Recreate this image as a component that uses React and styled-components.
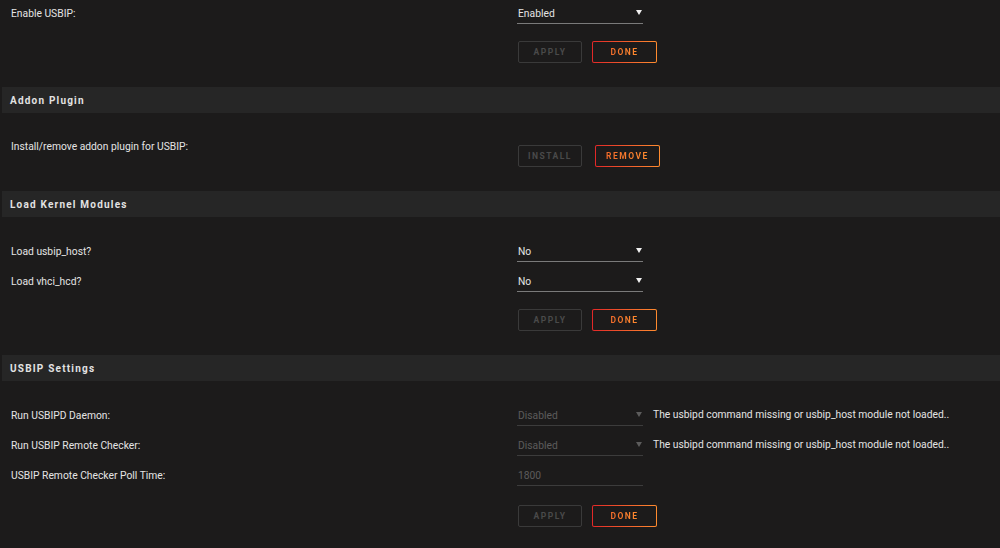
import React from 'react'
import styled, { createGlobalStyle } from 'styled-components'

const GlobalStyle = createGlobalStyle`
  html, body {
    margin: 0;
    padding: 0;
    background: #1c1b1b;
  }
  body {
    font-family: Roboto, 'Liberation Sans', sans-serif;
    color: #e4e4e4;
    font-size: 10.3px;
  }
`

const Page = styled.div`
  width: 1000px;
  height: 548px;
  overflow: hidden;
  background: #1c1b1b;
`

const Section = styled.div`
  padding: ${(p) => (p.first ? '0' : '19px')} 0 ${(p) => p.bottom ?? 24}px 0;
`

const Header = styled.div`
  height: 26px;
  margin-left: 2px;
  background: #262626;
  display: flex;
  align-items: center;
  padding-left: 8px;
  font-size: 10px;
  font-weight: 700;
  letter-spacing: 1.2px;
  color: #e2e2e2;
`

const Row = styled.div`
  display: flex;
  align-items: ${(p) => (p.top ? 'flex-start' : 'center')};
  height: ${(p) => (p.auto ? 'auto' : `${p.h || 30}px`)};
`

const Label = styled.div`
  width: 517px;
  padding-left: 11px;
  box-sizing: border-box;
  flex-shrink: 0;
  line-height: ${(p) => (p.lh ? `${p.lh}px` : 'normal')};
`

const Value = styled.div`
  display: flex;
  align-items: center;
`

const Select = styled.div`
  position: relative;
  width: 126px;
  height: 20px;
  box-sizing: border-box;
  margin-top: 1px;
  padding-left: 1px;
  display: flex;
  align-items: center;
  border-bottom: 1px solid ${(p) => (p.disabled ? '#3c3c3c' : '#7a7a7a')};
  color: ${(p) => (p.disabled ? '#5c5c5c' : '#e4e4e4')};

  &::after {
    content: '';
    position: absolute;
    right: 1px;
    top: 6px;
    border-left: 3px solid transparent;
    border-right: 3px solid transparent;
    border-top: 5px solid ${(p) => (p.disabled ? '#5c5c5c' : '#f0f0f0')};
  }
`

const Input = styled(Select)`
  &::after {
    display: none;
  }
`

const Message = styled.span`
  margin-left: 10px;
  color: #e4e4e4;
  margin-top: -1px;
`

const Buttons = styled.div`
  display: flex;
  gap: ${(p) => p.gap || 10}px;
  margin-left: 518px;
  margin-top: ${(p) => p.mt ?? 13}px;
`

const Button = styled.div`
  box-sizing: border-box;
  min-width: ${(p) => (p.primary ? 65 : 64)}px;
  height: 22px;
  padding: 0 6px;
  display: flex;
  align-items: center;
  justify-content: center;
  border-radius: 2px;
  font-size: 8.5px;
  font-weight: 700;
  letter-spacing: 1.5px;
  text-transform: uppercase;
  border: 1px solid #3a3a3a;
  color: #4a4a4a;
  ${(p) =>
    p.primary &&
    `
    border: 1px solid transparent;
    background:
      linear-gradient(#1c1b1b, #1c1b1b) padding-box,
      linear-gradient(90deg, #e22828, #ff8c2f) border-box;
  `}
`

const ButtonText = styled.span`
  ${(p) =>
    p.primary &&
    `
    background: linear-gradient(90deg, #f06a2a, #ff8c2f);
    -webkit-background-clip: text;
    background-clip: text;
    color: transparent;
  `}
`

const Btn = ({ primary, children }) => (
  <Button primary={primary}>
    <ButtonText primary={primary}>{children}</ButtonText>
  </Button>
)

const SelectRow = ({ label, value, disabled, message, input }) => (
  <Row>
    <Label>{label}</Label>
    <Value>
      {input ? (
        <Input disabled={disabled}>{value}</Input>
      ) : (
        <Select disabled={disabled}>{value}</Select>
      )}
      {message && <Message>{message}</Message>}
    </Value>
  </Row>
)

const missing = 'The usbipd command missing or usbip_host module not loaded..'

export default function App() {
  return (
    <Page>
      <GlobalStyle />
      <Section first>
        <Row h={26}>
          <Label>Enable USBIP:</Label>
          <Value>
            <Select>Enabled</Select>
          </Value>
        </Row>
        <Buttons mt={15}>
          <Btn>Apply</Btn>
          <Btn primary>Done</Btn>
        </Buttons>
      </Section>

      <Header>Addon Plugin</Header>
      <Section>
        <Row auto top>
          <Label lh={30}>Install/remove addon plugin for USBIP:</Label>
        </Row>
        <Buttons mt={-17} gap={13}>
          <Btn>Install</Btn>
          <Btn primary>Remove</Btn>
        </Buttons>
      </Section>

      <Header>Load Kernel Modules</Header>
      <Section>
        <SelectRow label="Load usbip_host?" value="No" />
        <SelectRow label="Load vhci_hcd?" value="No" />
        <Buttons>
          <Btn>Apply</Btn>
          <Btn primary>Done</Btn>
        </Buttons>
      </Section>

      <Header>USBIP Settings</Header>
      <Section bottom={21}>
        <SelectRow
          label="Run USBIPD Daemon:"
          value="Disabled"
          disabled
          message={missing}
        />
        <SelectRow
          label="Run USBIP Remote Checker:"
          value="Disabled"
          disabled
          message={missing}
        />
        <SelectRow
          label="USBIP Remote Checker Poll Time:"
          value="1800"
          disabled
          input
        />
        <Buttons mt={15}>
          <Btn>Apply</Btn>
          <Btn primary>Done</Btn>
        </Buttons>
      </Section>
    </Page>
  )
}
